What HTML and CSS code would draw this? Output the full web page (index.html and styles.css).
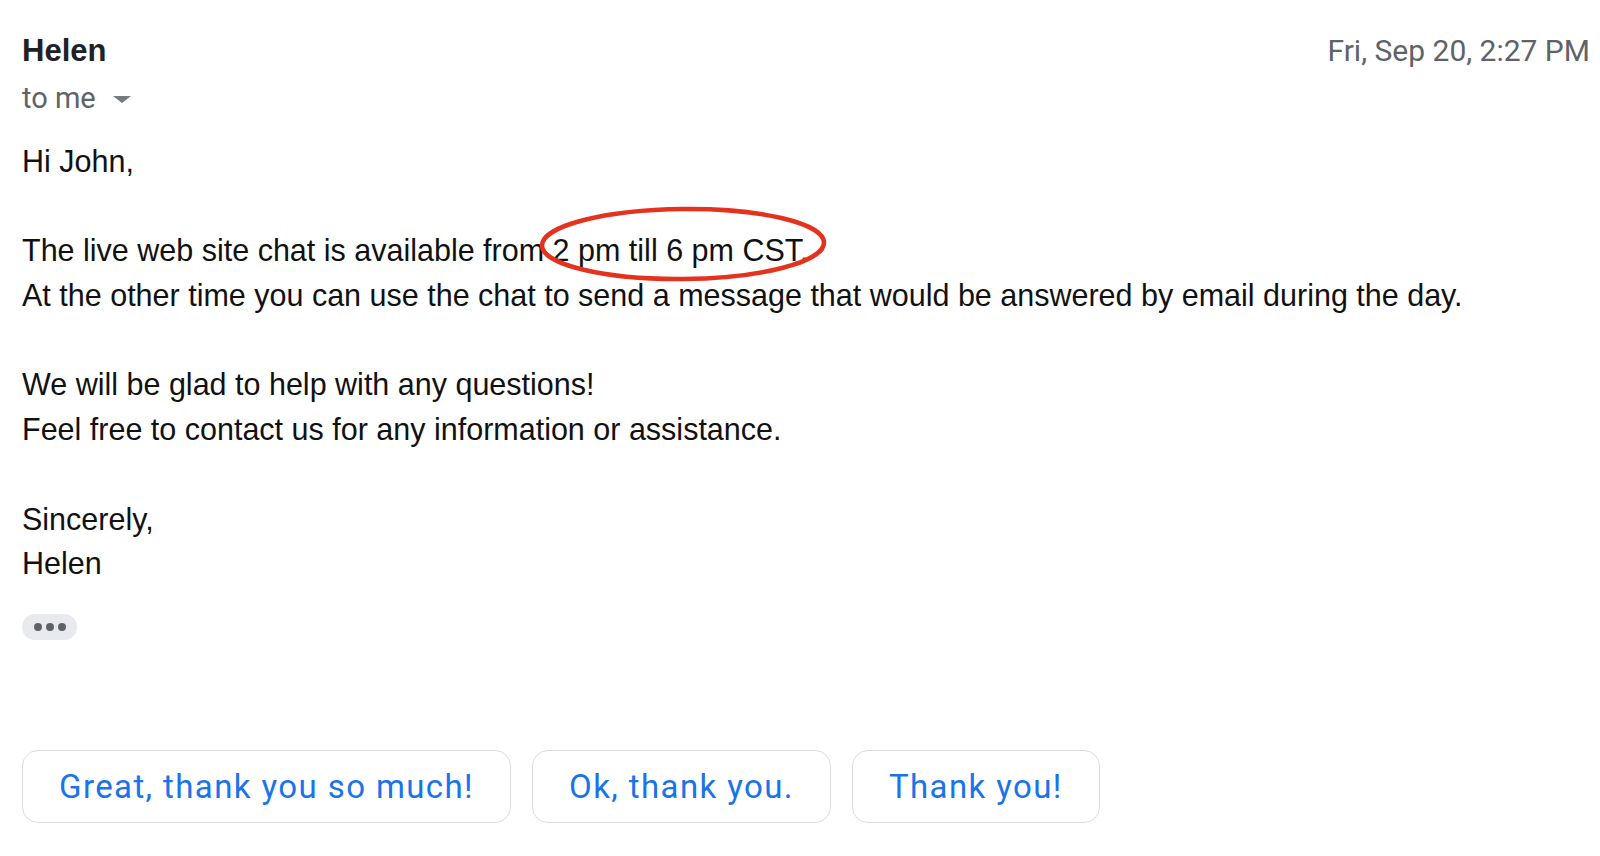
FILE: index.html
```html
<!DOCTYPE html>
<html>

<head>
    <title>Helen - Mail</title>
    <link rel="stylesheet" href="styles.css">
</head>

<body>
    <div class="message">
        <header class="msg-head">
            <div class="sender">
                <div class="sender-name">Helen</div>
                <div class="recipients">to me <span class="caret"></span></div>
            </div>
            <div class="msg-date">Fri, Sep 20, 2:27 PM</div>
        </header>

        <div class="msg-body">
            <p>Hi John,</p>
            <p>The live web site chat is available from <span class="circled">2 pm till 6 pm CST.<svg class="circle-mark" viewBox="0 0 292 78" width="292" height="78"><ellipse cx="146" cy="39" rx="141" ry="35" fill="none" stroke="#e5321f" stroke-width="4.5" transform="rotate(-0.6 146 39)"/></svg></span><br>
                At the other time you can use the chat to send a message that would be answered by email during the day.</p>
            <p>We will be glad to help with any questions!<br>
                Feel free to contact us for any information or assistance.</p>
            <p>Sincerely,<br>
                Helen</p>
        </div>

        <button class="more-dots" title="Show trimmed content">
            <span></span><span></span><span></span>
        </button>

        <div class="smart-replies">
            <button class="reply-chip">Great, thank you so much!</button>
            <button class="reply-chip">Ok, thank you.</button>
            <button class="reply-chip">Thank you!</button>
        </div>
    </div>
</body>

</html>
```

FILE: styles.css
```css
body {
    margin: 0;
    padding: 0;
    background: white;
    font-family: "Liberation Sans", Arial, sans-serif;
}

.message {
    padding: 33px 10px 0 22px;
}

.msg-head {
    display: flex;
    justify-content: space-between;
    align-items: flex-start;
}

.sender-name {
    font-size: 31px;
    font-weight: bold;
    line-height: 36px;
    color: #202124;
}

.recipients {
    margin-top: 11px;
    font-family: Roboto, sans-serif;
    font-size: 29px;
    line-height: 36px;
    color: #5f6368;
    display: flex;
    align-items: center;
}

.caret {
    display: inline-block;
    margin-left: 17px;
    margin-top: 2px;
    border-left: 9px solid transparent;
    border-right: 9px solid transparent;
    border-top: 7px solid #777a7e;
}

.msg-date {
    font-family: Roboto, sans-serif;
    font-size: 30px;
    line-height: 36px;
    color: #5f6368;
}

.msg-body {
    margin-top: 23px;
    font-size: 30.5px;
    line-height: 44.7px;
    color: #111;
}

.msg-body p {
    margin: 0 0 44.7px 0;
}

.msg-body p:last-child {
    margin-bottom: 0;
}

.circled {
    position: relative;
}

.circle-mark {
    position: absolute;
    left: -16px;
    top: -28px;
    pointer-events: none;
}

.more-dots {
    margin-top: 28px;
    width: 55px;
    height: 26px;
    border: none;
    border-radius: 13px;
    background: #e8eaed;
    display: flex;
    align-items: center;
    justify-content: center;
    gap: 4px;
    padding: 0;
}

.more-dots span {
    width: 8px;
    height: 8px;
    border-radius: 50%;
    background: #5f6368;
}

.smart-replies {
    margin-top: 110px;
    display: flex;
    gap: 21px;
}

.reply-chip {
    height: 73px;
    padding: 0 36px;
    background: white;
    border: 1.5px solid #dadce0;
    border-radius: 16px;
    font-family: Roboto, sans-serif;
    font-size: 33px;
    letter-spacing: 1.4px;
    color: #1a73e8;
}
```
